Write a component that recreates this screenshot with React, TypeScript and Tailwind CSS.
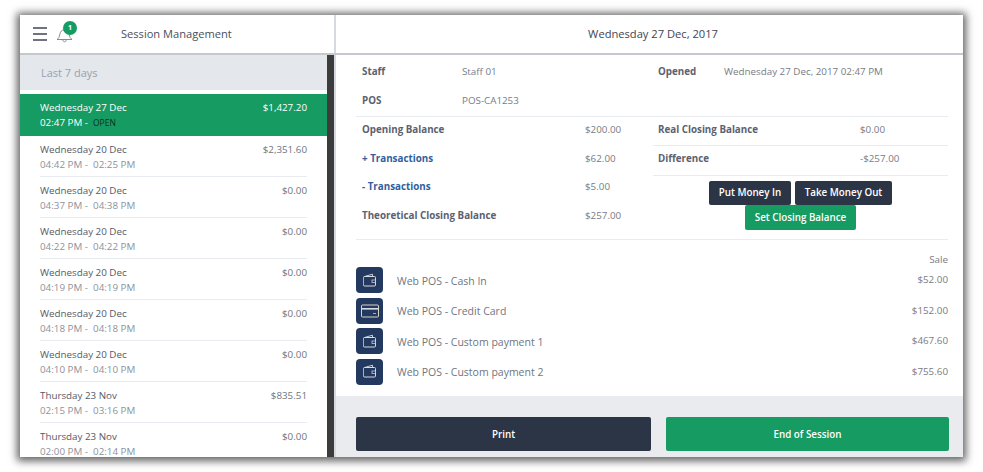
const sessions = [
  { day: "Wednesday 20 Dec", from: "04:42 PM", to: "02:25 PM", amount: "$2,351.60" },
  { day: "Wednesday 20 Dec", from: "04:37 PM", to: "04:38 PM", amount: "$0.00" },
  { day: "Wednesday 20 Dec", from: "04:22 PM", to: "04:22 PM", amount: "$0.00" },
  { day: "Wednesday 20 Dec", from: "04:19 PM", to: "04:19 PM", amount: "$0.00" },
  { day: "Wednesday 20 Dec", from: "04:18 PM", to: "04:18 PM", amount: "$0.00" },
  { day: "Wednesday 20 Dec", from: "04:10 PM", to: "04:10 PM", amount: "$0.00" },
  { day: "Thursday 23 Nov", from: "02:15 PM", to: "03:16 PM", amount: "$835.51" },
  { day: "Thursday 23 Nov", from: "02:00 PM", to: "02:14 PM", amount: "$0.00" },
];

const payments = [
  { name: "Web POS - Cash In", amount: "$52.00", card: false },
  { name: "Web POS - Credit Card", amount: "$152.00", card: true },
  { name: "Web POS - Custom payment 1", amount: "$467.60", card: false },
  { name: "Web POS - Custom payment 2", amount: "$755.60", card: false },
];

function WalletIcon() {
  return (
    <svg width="15" height="15" viewBox="0 0 15 15" fill="none">
      <path d="M2.5 3.5 10.5 1.2V3.5" stroke="#c8ccd6" strokeWidth="1" />
      <rect x="1.5" y="3.5" width="12" height="9.5" rx="1" stroke="#d8dbe2" strokeWidth="1" />
      <path d="M1.5 4v8.5" stroke="#d99aa0" strokeWidth="1" />
      <rect x="10" y="7" width="3.5" height="2.5" stroke="#c8ccd6" strokeWidth="0.8" />
    </svg>
  );
}

function CardIcon() {
  return (
    <svg width="18" height="14" viewBox="0 0 18 14" fill="none">
      <rect x="0.5" y="1" width="17" height="12" rx="1" stroke="#d8d4c8" strokeWidth="1" />
      <rect x="1" y="4" width="16" height="1.6" fill="#d8dbe2" />
      <path d="M12 9.5h3" stroke="#c8ccd6" strokeWidth="0.8" />
    </svg>
  );
}

function Row({ label, value, blue }: { label: string; value: string; blue?: boolean }) {
  return (
    <div className="flex h-[28.67px] items-center pl-[6px]">
      <span className={`w-[223px] font-bold ${blue ? "text-[#2f5f9e]" : "text-[#5b6270]"}`}>{label}</span>
      <span className="text-[#777c85]">{value}</span>
    </div>
  );
}

export default function App() {
  return (
    <div className="h-[472px] w-[983px] overflow-hidden bg-white pl-[20px] pt-[15px] font-['Open_Sans',sans-serif] text-[9.8px]">
      <div className="flex h-[442px] w-[943px] flex-col bg-white shadow-[0_1px_8px_3px_rgba(0,0,0,0.62)]">
        <header className="flex h-[40px] shrink-0 border-b-2 border-[#c5c9cd] bg-white">
          <div className="flex w-[316px] shrink-0 items-center border-r-2 border-[#d6d9dd]">
            <div className="ml-[13px] flex w-[14px] flex-col gap-[4px]">
              <span className="h-[2px] bg-[#6d7383]" />
              <span className="h-[2px] bg-[#6d7383]" />
              <span className="h-[2px] bg-[#6d7383]" />
            </div>
            <div className="relative ml-[9px] h-[18px] w-[18px]">
              <svg width="17" height="17" viewBox="0 0 17 17" fill="none" className="mt-[1px]">
                <path d="M1 13.5c1.6-1.2 2.4-2.4 2.8-5 .4-2.7 2-4.7 4.7-4.7s4.3 2 4.7 4.7c.4 2.6 1.2 3.8 2.8 5H1Z" stroke="#858a96" strokeWidth="1" />
                <path d="M6.8 14c.2 1.2.9 1.8 1.7 1.8s1.5-.6 1.7-1.8" stroke="#858a96" strokeWidth="1" />
              </svg>
              <span className="absolute left-[7px] top-[-4px] flex h-[14px] w-[14px] items-center justify-center rounded-full bg-[#169b62] text-[7px] font-bold text-white">
                1
              </span>
            </div>
            <span className="ml-[47px] text-[11.1px] text-[#4a4f5c]">Session Management</span>
          </div>
          <div className="flex flex-1 items-center justify-center pl-[7px] text-[11.15px] text-[#3f4451]">Wednesday 27 Dec, 2017</div>
        </header>

        <div className="flex min-h-0 flex-1">
          <aside className="flex w-[316px] shrink-0 border-r-2 border-[#d6d9dd]">
            <div className="min-w-0 flex-1 overflow-hidden">
              <div className="flex h-[35px] items-center bg-[#e4e7ec] pl-[21px] pt-[2px] text-[11px] text-[#9aa0ae]">Last 7 days</div>
              <div className="mt-[4px] flex h-[42px] justify-between bg-[#169b62] pl-[20px] pr-[20px] pt-[7px] leading-[14.5px] text-white">
                <div>
                  <div>Wednesday 27 Dec</div>
                  <div>
                    02:47 PM -<span className="ml-[5px] text-[8.5px] text-[#08301f]">OPEN</span>
                  </div>
                </div>
                <div>$1,427.20</div>
              </div>
              {sessions.map((s, i) => (
                <div key={i} className="mx-[20px] flex h-[41px] justify-between border-b border-[#e8ebf0] pt-[6px] leading-[15px]">
                  <div>
                    <div className="text-[#545a67]">{s.day}</div>
                    <div className="text-[#8d929b]">
                      {s.from} -&nbsp; {s.to}
                    </div>
                  </div>
                  <div className="text-[#6f747e]">{s.amount}</div>
                </div>
              ))}
            </div>
            <div className="w-[7px] shrink-0 bg-[#3c3c3c]" />
          </aside>

          <main className="flex min-w-0 flex-1 flex-col">
            <div className="min-h-0 flex-1 pl-[20px] pr-[15px]">
              <div className="flex h-[62px] border-b border-[#e8ebf0]">
                <div className="w-[297px]">
                  <div className="flex h-[35px] items-center pl-[6px]">
                    <span className="w-[100px] font-bold text-[#5b6270]">Staff</span>
                    <span className="text-[#777c85]">Staff 01</span>
                  </div>
                  <div className="flex h-[23px] items-center pl-[6px]">
                    <span className="w-[100px] font-bold text-[#5b6270]">POS</span>
                    <span className="text-[#777c85]">POS-CA1253</span>
                  </div>
                </div>
                <div className="flex h-[35px] items-center pl-[5px]">
                  <span className="w-[66px] font-bold text-[#5b6270]">Opened</span>
                  <span className="text-[#777c85]">Wednesday 27 Dec, 2017 02:47 PM</span>
                </div>
              </div>

              <div className="flex h-[123px] border-b border-[#e8ebf0]">
                <div className="-mt-[1px] w-[297px]">
                  <Row label="Opening Balance" value="$200.00" />
                  <Row label="+ Transactions" value="$62.00" blue />
                  <Row label="- Transactions" value="$5.00" blue />
                  <Row label="Theoretical Closing Balance" value="$257.00" />
                </div>
                <div className="flex-1">
                  <div className="flex h-[29px] items-center border-b border-[#e8ebf0] pb-[1px] pl-[5px]">
                    <span className="w-[202px] font-bold text-[#5b6270]">Real Closing Balance</span>
                    <span className="text-[#777c85]">$0.00</span>
                  </div>
                  <div className="flex h-[30px] items-center border-b border-[#e8ebf0] pb-[2px] pl-[5px]">
                    <span className="w-[202px] font-bold text-[#5b6270]">Difference</span>
                    <span className="text-[#777c85]">-$257.00</span>
                  </div>
                  <div className="mt-[5px] flex flex-col items-center">
                    <div className="flex gap-[4px]">
                      <button className="h-[24px] w-[82px] rounded-[2px] bg-[#2c3545] pt-[1px] font-semibold text-white">Put Money In</button>
                      <button className="h-[24px] w-[97px] rounded-[2px] bg-[#2c3545] pt-[1px] font-semibold text-white">Take Money Out</button>
                    </div>
                    <button className="h-[25px] w-[111px] rounded-[2px] bg-[#169b62] pt-[1px] font-semibold text-white">Set Closing Balance</button>
                  </div>
                </div>
              </div>

              <div className="mt-[13px] text-right leading-[14px] text-[#777c85]">Sale</div>
              <div className="flex flex-col">
                {payments.map((p) => (
                  <div key={p.name} className="flex h-[30.5px] items-start justify-between">
                    <div className="flex items-center">
                      <span className="flex h-[26px] w-[27px] items-center justify-center rounded-[4px] bg-[#24395f]">
                        {p.card ? <CardIcon /> : <WalletIcon />}
                      </span>
                      <span className="ml-[14px] pt-[3px] text-[10.5px] text-[#70757f]">{p.name}</span>
                    </div>
                    <span className="pt-[6px] text-[#777c85]">{p.amount}</span>
                  </div>
                ))}
              </div>
            </div>

            <footer className="flex h-[61px] shrink-0 gap-[15px] bg-[#e9ebef] pl-[20px] pr-[14px] pt-[21px]">
              <button className="h-[34px] w-[295px] rounded-[2px] bg-[#2c3545] pt-[2px] font-semibold text-white">Print</button>
              <button className="h-[34px] flex-1 rounded-[2px] bg-[#169b62] pt-[2px] font-semibold text-white">End of Session</button>
            </footer>
          </main>
        </div>
      </div>
    </div>
  );
}
